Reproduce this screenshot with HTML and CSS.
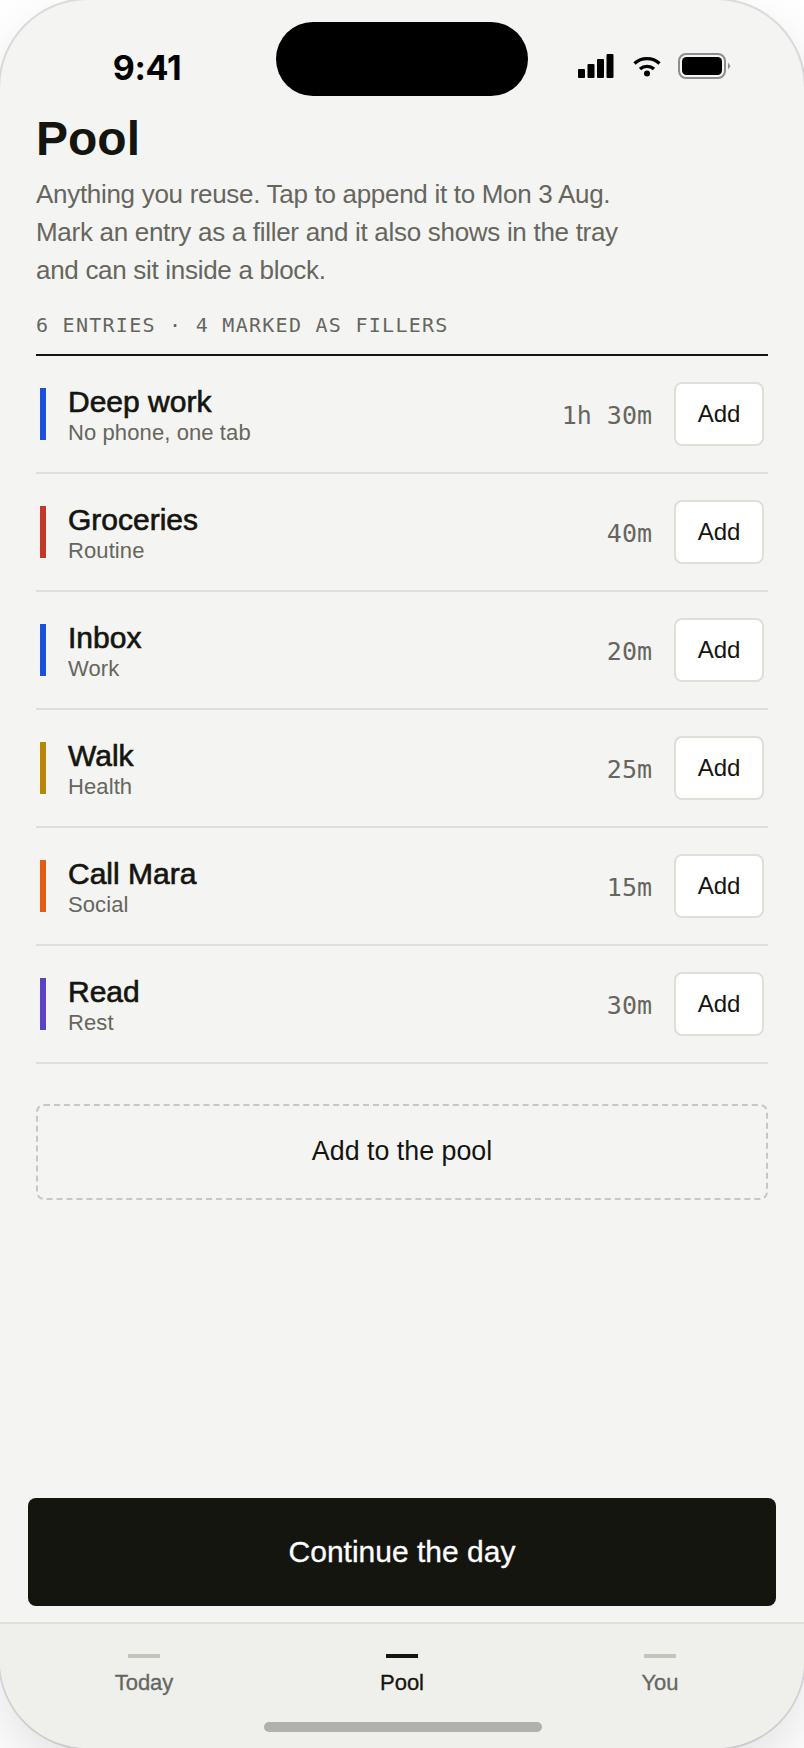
FILE: index.html
```html
<!doctype html>
<html>
<head>
<title>Pool</title>
<meta http-equiv="Content-Type" content="text/html; charset=utf-8" />
<link rel="stylesheet" href="styles.css">
</head>
<body>

<div class="phone">
	<div class="status-bar">
		<span class="clock">9:41</span>
		<div class="island"></div>
		<div class="status-icons">
			<svg class="signal" width="36" height="24" viewBox="0 0 36 24">
				<rect x="0" y="15" width="7" height="9" rx="1" />
				<rect x="9.5" y="10" width="7" height="14" rx="1" />
				<rect x="19" y="5" width="7" height="19" rx="1" />
				<rect x="28.5" y="0" width="7" height="24" rx="1" />
			</svg>
			<svg class="wifi" width="28" height="22" viewBox="0 0 28 22">
				<path d="M1.5 8.5 C8.5 2 19.5 2 26.5 8.5" fill="none" stroke="#000" stroke-width="3.4" />
				<path d="M7 14 C11 10.5 17 10.5 21 14" fill="none" stroke="#000" stroke-width="3.4" />
				<circle cx="14" cy="18.6" r="3" fill="#000" />
			</svg>
			<svg class="battery" width="54" height="26" viewBox="0 0 54 26">
				<rect x="1" y="1" width="46" height="24" rx="7" fill="none" stroke="#8e8e8e" stroke-width="2" />
				<rect x="4" y="4" width="40" height="18" rx="4.5" fill="#000" />
				<path d="M50 9.5 L52.5 13 L50 16.5 Z" fill="#8e8e8e" />
			</svg>
		</div>
	</div>

	<div class="content">
		<h1 class="title">Pool</h1>
		<p class="intro">Anything you reuse. Tap to append it to Mon 3 Aug.<br>Mark an entry as a filler and it also shows in the tray<br>and can sit inside a block.</p>
		<div class="count">6 ENTRIES · 4 MARKED AS FILLERS</div>

		<ul class="entries">
			<li class="entry">
				<span class="swatch swatch-work"></span>
				<div class="entry-text">
					<div class="entry-name">Deep work</div>
					<div class="entry-note">No phone, one tab</div>
				</div>
				<span class="entry-time">1h 30m</span>
				<button class="add-btn">Add</button>
			</li>
			<li class="entry">
				<span class="swatch swatch-routine"></span>
				<div class="entry-text">
					<div class="entry-name">Groceries</div>
					<div class="entry-note">Routine</div>
				</div>
				<span class="entry-time">40m</span>
				<button class="add-btn">Add</button>
			</li>
			<li class="entry">
				<span class="swatch swatch-work"></span>
				<div class="entry-text">
					<div class="entry-name">Inbox</div>
					<div class="entry-note">Work</div>
				</div>
				<span class="entry-time">20m</span>
				<button class="add-btn">Add</button>
			</li>
			<li class="entry">
				<span class="swatch swatch-health"></span>
				<div class="entry-text">
					<div class="entry-name">Walk</div>
					<div class="entry-note">Health</div>
				</div>
				<span class="entry-time">25m</span>
				<button class="add-btn">Add</button>
			</li>
			<li class="entry">
				<span class="swatch swatch-social"></span>
				<div class="entry-text">
					<div class="entry-name">Call Mara</div>
					<div class="entry-note">Social</div>
				</div>
				<span class="entry-time">15m</span>
				<button class="add-btn">Add</button>
			</li>
			<li class="entry">
				<span class="swatch swatch-rest"></span>
				<div class="entry-text">
					<div class="entry-name">Read</div>
					<div class="entry-note">Rest</div>
				</div>
				<span class="entry-time">30m</span>
				<button class="add-btn">Add</button>
			</li>
		</ul>

		<button class="add-pool">Add to the pool</button>
	</div>

	<div class="footer-action">
		<button class="continue">Continue the day</button>
	</div>

	<nav class="tabs">
		<div class="tab"><span class="tab-mark"></span>Today</div>
		<div class="tab tab-active"><span class="tab-mark"></span>Pool</div>
		<div class="tab"><span class="tab-mark"></span>You</div>
	</nav>
	<div class="home-bar"></div>
</div>

</body>
</html>
```
FILE: styles.css
```css
html, body {
	margin: 0;
	height: 100%;
}

body {
	background-color: #fff;
	font-family: "Liberation Sans", sans-serif;
	color: #15150f;
	overflow: hidden;
}

.phone {
	display: flex;
	flex-direction: column;
	width: 804px;
	height: 1748px;
	overflow: hidden;
	background-color: #f4f4f2;
	border-radius: 88px;
	box-shadow: 0 0 0 2px rgba(0, 0, 0, 0.12), 0 24px 60px rgba(0, 0, 0, 0.12);
}

.status-bar {
	display: flex;
	align-items: center;
	height: 74px;
	padding-top: 22px;
}

.clock {
	box-sizing: border-box;
	width: 276px;
	padding-top: 16px;
	padding-left: 18px;
	text-align: center;
	font-family: Inter, sans-serif;
	font-size: 34px;
	font-weight: 700;
	letter-spacing: -0.01em;
	color: #000;
}

.island {
	width: 252px;
	height: 74px;
	background-color: #000;
	border-radius: 37px;
}

.status-icons {
	display: flex;
	align-items: center;
	gap: 19px;
	margin-left: 50px;
	padding-top: 14px;
}

.wifi {
	margin-right: -2px;
}

.content {
	flex: 1;
	padding: 14px 36px 0;
}

.title {
	margin: 0;
	font-size: 48px;
	line-height: 58px;
	font-weight: 700;
}

.intro {
	margin: 7px 0 0;
	font-size: 26px;
	line-height: 38px;
	letter-spacing: -0.3px;
	color: #66665e;
}

.count {
	margin-top: 24px;
	padding-bottom: 17px;
	border-bottom: 2px solid #15150f;
	font-family: "DejaVu Sans Mono", monospace;
	font-size: 20px;
	line-height: 24px;
	letter-spacing: 1.27px;
	color: #66665e;
}

.entries {
	margin: 0;
	padding: 0;
	list-style: none;
}

.entry {
	display: flex;
	align-items: center;
	height: 116px;
	padding: 0 4px;
	border-bottom: 2px solid #dfdfd8;
}

.swatch {
	width: 6px;
	height: 52px;
	margin-right: 22px;
}

.swatch-work { background-color: #1d4fd8; }
.swatch-routine { background-color: #c0392b; }
.swatch-health { background-color: #b8860b; }
.swatch-social { background-color: #e05e14; }
.swatch-rest { background-color: #5b43c4; }

.entry-text {
	flex: 1;
	padding-top: 3px;
}

.entry-name {
	font-size: 30px;
	line-height: 34px;
	-webkit-text-stroke: 0.65px #15150f;
}

.entry-note {
	font-size: 22px;
	line-height: 28px;
	letter-spacing: 0.1px;
	color: #66665e;
}

.entry-time {
	margin-right: 22px;
	padding-top: 2px;
	font-family: "DejaVu Sans Mono", monospace;
	font-size: 25px;
	color: #66665e;
}

.add-btn {
	box-sizing: border-box;
	width: 90px;
	height: 64px;
	padding: 0;
	background-color: #fff;
	border: 2px solid #dfdfd8;
	border-radius: 8px;
	font-family: inherit;
	font-size: 24px;
	font-weight: 400;
	color: #15150f;
}

.add-pool {
	display: block;
	box-sizing: border-box;
	width: 100%;
	height: 96px;
	margin-top: 40px;
	padding-bottom: 3px;
	background: none;
	border: 2px dashed #c8c8c0;
	border-radius: 8px;
	font-family: inherit;
	font-size: 26.8px;
	color: #15150f;
}

.footer-action {
	padding: 0 28px 16px;
}

.continue {
	display: block;
	width: 100%;
	height: 108px;
	background-color: #15150f;
	border: 0;
	border-radius: 8px;
	font-family: inherit;
	font-size: 30px;
	font-weight: 400;
	-webkit-text-stroke: 0.3px #fff;
	color: #fff;
}

.tabs {
	display: grid;
	grid-template-columns: repeat(3, 1fr);
	box-sizing: border-box;
	height: 100px;
	padding: 30px 15px 0;
	background-color: #efefeb;
	border-top: 2px solid #dfdfd8;
}

.tab {
	display: flex;
	flex-direction: column;
	align-items: center;
	gap: 12px;
	font-size: 22px;
	font-weight: 400;
	-webkit-text-stroke: 0.3px currentColor;
	color: #66665e;
}

.tab-mark {
	width: 32px;
	height: 4px;
	background-color: #c4c4bc;
}

.tab-active {
	color: #15150f;
}

.tab-active .tab-mark {
	background-color: #15150f;
}

.home-bar {
	height: 26px;
	padding-left: 264px;
	background-color: #efefeb;
}

.home-bar::before {
	content: "";
	display: block;
	width: 278px;
	height: 10px;
	background-color: #b0b0ae;
	border-radius: 5px;
}
```
